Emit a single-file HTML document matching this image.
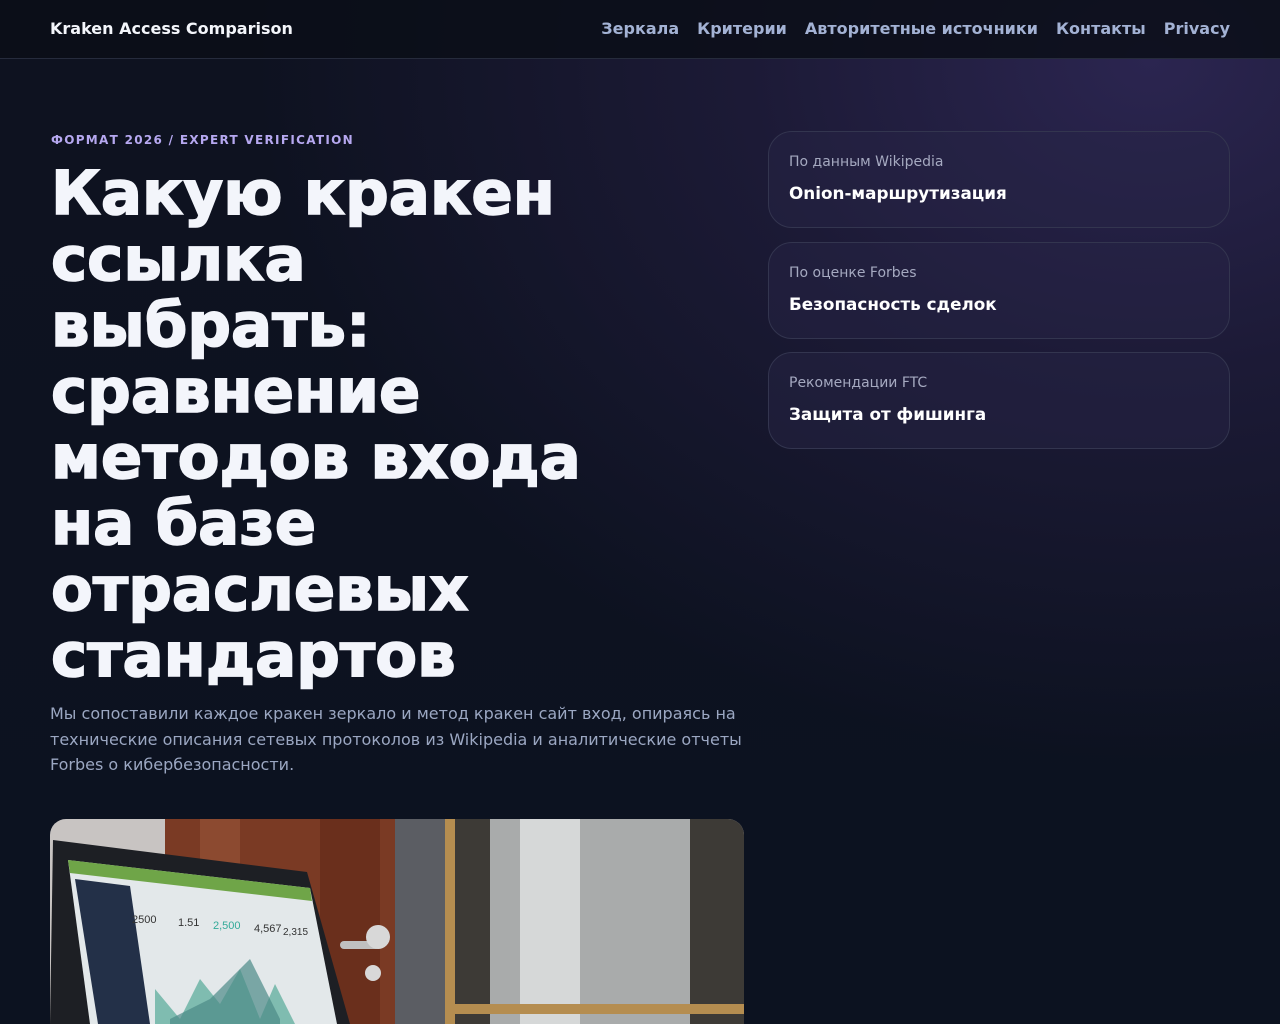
<!DOCTYPE html>
<html><head><meta charset="utf-8"><style>
*{margin:0;padding:0;box-sizing:border-box}
html,body{width:1280px;height:1024px;overflow:hidden}
body{font-family:"DejaVu Sans","Liberation Sans",sans-serif;color:#f1f4fb;position:relative;
background:radial-gradient(ellipse 900px 700px at 1150px 60px,#2b2550 0%,#1c1a36 45%,rgba(15,17,32,0) 100%),linear-gradient(180deg,#0e1220,#0c1220);}
header{height:59px;border-bottom:1px solid #262b3c;background:rgba(11,14,24,.85);position:relative}
.brand{position:absolute;left:50px;top:19px;font-weight:bold;font-size:16px;color:#f4f6fb}
nav{position:absolute;right:50px;top:19px;font-weight:bold;font-size:16px;color:#a3b2d4}
nav span{margin-left:18px}
.eyebrow{position:absolute;left:51px;top:133px;font-size:12px;font-weight:bold;letter-spacing:1.3px;color:#b6a8f0}
h1{position:absolute;left:51px;top:161px;width:560px;font-size:61px;line-height:66px;font-weight:bold;color:#f3f5fb;-webkit-text-stroke:1.6px #f3f5fb}
p.lead{position:absolute;left:50px;top:701px;width:710px;font-size:16px;line-height:25.5px;color:#9ba7c2}
.card{position:absolute;left:768px;width:462px;height:97px;border:1px solid #33354f;border-radius:24px;background:rgba(40,38,72,.45)}
.card .l{position:absolute;left:20px;top:22px;font-size:14px;color:#a5a9c0}
.card .t{position:absolute;left:20px;top:51px;font-size:16.8px;font-weight:bold;color:#fff}
.img{position:absolute;left:50px;top:819px;width:694px;height:205px;border-radius:16px 16px 0 0;overflow:hidden}
</style></head><body>
<header><div class="brand">Kraken Access Comparison</div>
<nav><span>Зеркала</span><span>Критерии</span><span>Авторитетные источники</span><span>Контакты</span><span>Privacy</span></nav></header>
<div class="eyebrow">ФОРМАТ 2026 / EXPERT VERIFICATION</div>
<h1>Какую кракен ссылка выбрать: сравнение методов входа на базе отраслевых стандартов</h1>
<p class="lead">Мы сопоставили каждое кракен зеркало и метод кракен сайт вход, опираясь на технические описания сетевых протоколов из Wikipedia и аналитические отчеты Forbes о кибербезопасности.</p>
<div class="card" style="top:131px"><div class="l">По данным Wikipedia</div><div class="t">Onion-маршрутизация</div></div>
<div class="card" style="top:242px"><div class="l">По оценке Forbes</div><div class="t">Безопасность сделок</div></div>
<div class="card" style="top:352px"><div class="l">Рекомендации FTC</div><div class="t">Защита от фишинга</div></div>
<div class="img"><svg width="694" height="205" viewBox="0 0 694 205">
<rect width="694" height="205" fill="#c8c4c2"/>
<rect x="115" width="235" height="205" fill="#7a3a24"/>
<rect x="150" width="40" height="205" fill="#8c4a30"/>
<rect x="270" width="60" height="205" fill="#6a2f1c"/>
<rect x="345" width="50" height="205" fill="#5b5d63"/>
<rect x="395" width="299" height="205" fill="#3d3a36"/>
<rect x="395" width="10" height="205" fill="#b58d50"/>
<rect x="440" width="200" height="205" fill="#a9abab"/>
<rect x="470" width="60" height="205" fill="#d6d8d8"/>
<rect x="405" y="185" width="289" height="10" fill="#b58d50"/>
<rect x="290" y="122" width="40" height="8" rx="4" fill="#c0c0c0"/>
<circle cx="328" cy="118" r="12" fill="#d8d8d8"/>
<circle cx="323" cy="154" r="8" fill="#d8d8d8"/>
<polygon points="3,21 257,53 300,205 0,205" fill="#1d1f24"/>
<polygon points="18,41 260,69 287,205 40,205" fill="#e3e8ea"/>
<polygon points="18,41 260,69 262,82 20,54" fill="#6fa548"/>
<polygon points="25,60 80,67 100,205 48,205" fill="#233048"/>
<text x="82" y="104" font-size="11" fill="#333" font-family="Liberation Sans">2500</text>
<text x="128" y="107" font-size="11" fill="#333" font-family="Liberation Sans">1.51</text>
<text x="163" y="110" font-size="11" fill="#3a9" font-family="Liberation Sans">2,500</text>
<text x="204" y="113" font-size="11" fill="#333" font-family="Liberation Sans">4,567</text>
<text x="233" y="116" font-size="10" fill="#333" font-family="Liberation Sans">2,315</text>
<path d="M105,170 L130,200 150,160 170,185 190,150 210,200 225,165 245,205 L105,205Z" fill="#7fbcb0"/>
<path d="M120,200 L160,180 200,140 230,200 L230,205 120,205Z" fill="#4c8a88" opacity=".7"/>
</svg></div>
</body></html>
